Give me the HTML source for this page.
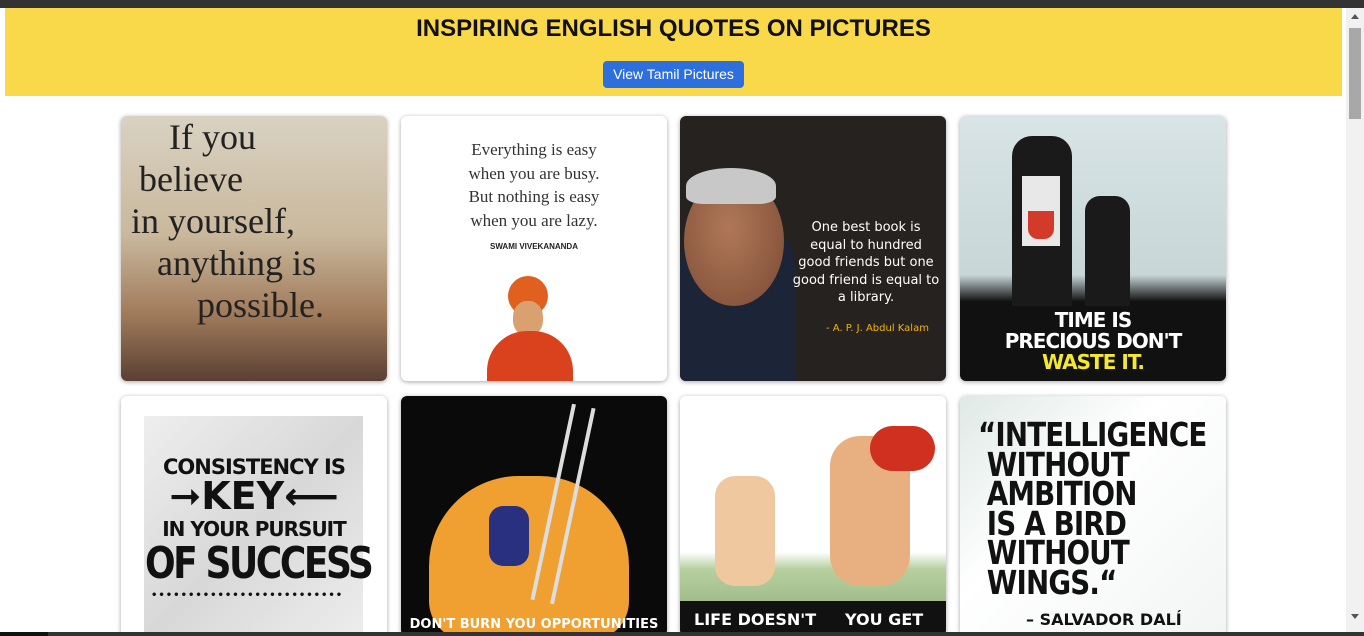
<!DOCTYPE html>
<html><head><meta charset="utf-8"><style>
*{margin:0;padding:0;box-sizing:border-box}
body{width:1364px;height:636px;overflow:hidden;background:#fff;font-family:"Liberation Sans",sans-serif;position:relative}
.top{position:absolute;left:0;top:0;width:1364px;height:8px;background:#333}
.hdr{position:absolute;left:5px;top:8px;width:1337px;height:88px;background:#f9d84a;text-align:center}
.hdr h1{font-size:24px;font-weight:bold;color:#111;margin-top:7px;letter-spacing:0;font-family:"Liberation Sans",sans-serif}
.btn{position:absolute;left:598px;top:53px;width:141px;height:27px;background:#2d6fdc;color:#fff;font-size:14px;border-radius:4px;line-height:27px}
.sb{position:absolute;left:1346px;top:8px;width:18px;height:624px;background:#f1f1f1}
.sb .th{position:absolute;left:3px;top:20px;width:12px;height:91px;background:#a8a8a8}
.sb .ar{position:absolute;left:5px;top:6px;border-left:4px solid transparent;border-right:4px solid transparent;border-bottom:5px solid #555}
.sb .ar2{position:absolute;left:5px;top:606px;border-left:4px solid transparent;border-right:4px solid transparent;border-top:5px solid #555}
.bot{position:absolute;left:0;top:632px;width:1364px;height:4px;background:#333}
.bot i{position:absolute;left:0;top:0;width:48px;height:4px;background:#111}
.c{position:absolute;width:266px;height:265px;border-radius:6px;overflow:hidden;box-shadow:0 1px 5px rgba(0,0,0,.35)}
.t{position:absolute;white-space:nowrap}
</style></head><body>
<div class="top"></div>
<div class="hdr"><h1>INSPIRING ENGLISH QUOTES ON PICTURES</h1><div class="btn">View Tamil Pictures</div></div>

<div class="c" style="left:121px;top:116px;background:linear-gradient(#d9d2c2 0%,#c9b89c 45%,#a07a5a 75%,#5a4034 100%)">
<div class="t" style="left:48px;top:0;font:36px/42px 'Liberation Serif',serif;color:#222">If you</div>
<div class="t" style="left:18px;top:42px;font:36px/42px 'Liberation Serif',serif;color:#222">believe</div>
<div class="t" style="left:10px;top:84px;font:36px/42px 'Liberation Serif',serif;color:#222">in yourself,</div>
<div class="t" style="left:36px;top:126px;font:36px/42px 'Liberation Serif',serif;color:#222">anything is</div>
<div class="t" style="left:76px;top:168px;font:36px/42px 'Liberation Serif',serif;color:#222">possible.</div>
</div>

<div class="c" style="left:401px;top:116px;background:#fff">
<div class="t" style="left:0;width:266px;text-align:center;top:22px;font:17px/23.5px 'Liberation Serif',serif;color:#333">Everything is easy<br>when you are busy.<br>But nothing is easy<br>when you are lazy.</div>
<div class="t" style="left:0;width:266px;text-align:center;top:126px;font:bold 8px 'Liberation Sans',sans-serif;color:#222">SWAMI VIVEKANANDA</div>
<div style="position:absolute;left:107px;top:160px;width:40px;height:40px;border-radius:50%;background:#e06020"></div>
<div style="position:absolute;left:112px;top:185px;width:30px;height:35px;border-radius:45%;background:#d9a070"></div>
<div style="position:absolute;left:86px;top:215px;width:86px;height:60px;border-radius:40px 40px 0 0;background:#d9421c"></div>
</div>

<div class="c" style="left:680px;top:116px;background:#262220">
<div style="position:absolute;left:0;top:110px;width:115px;height:160px;border-radius:40px 40px 0 0;background:#1c2438"></div>
<div style="position:absolute;left:4px;top:60px;width:100px;height:130px;border-radius:50%;background:radial-gradient(ellipse at 45% 40%,#b07858,#7a4a34)"></div>
<div style="position:absolute;left:6px;top:52px;width:90px;height:36px;border-radius:50% 50% 20% 20%;background:#c8c8c8"></div>
<div class="t" style="left:106px;top:103px;width:160px;text-align:center;font:13px/17.5px 'DejaVu Sans',sans-serif;color:#fff">One best book is<br>equal to hundred<br>good friends but one<br>good friend is equal to<br>a library.</div>
<div class="t" style="left:146px;top:207px;font:10px 'DejaVu Sans',sans-serif;color:#f5b400">- A. P. J. Abdul Kalam</div>
</div>

<div class="c" style="left:960px;top:116px;background:linear-gradient(#d8e4e6 0%,#c8d6d8 60%,#111 70%,#111 100%)">
<div style="position:absolute;left:52px;top:20px;width:60px;height:170px;background:#1a1a1a;border-radius:20px 20px 0 0"></div>
<div style="position:absolute;left:125px;top:80px;width:45px;height:110px;background:#1a1a1a;border-radius:15px 15px 0 0"></div>
<div style="position:absolute;left:62px;top:60px;width:38px;height:70px;background:#e8e8e8"></div>
<div style="position:absolute;left:68px;top:95px;width:26px;height:28px;background:#d43a2a;border-radius:0 0 10px 10px"></div>
<div class="t" style="left:0;width:266px;text-align:center;top:194px;font:bold 20px/21px 'DejaVu Sans',sans-serif;color:#fff;letter-spacing:-1px">TIME IS<br>PRECIOUS DON'T<br><span style="color:#f5e830">WASTE IT.</span></div>
</div>

<div class="c" style="left:121px;top:396px;height:240px;background:#fff">
<div style="position:absolute;left:23px;top:20px;width:219px;height:230px;background:linear-gradient(135deg,#eee,#d8d8d8 50%,#eee)"></div>
<div class="t" style="left:0;width:266px;text-align:center;top:58px;font:bold 21px/26px 'DejaVu Sans',sans-serif;color:#111;letter-spacing:-1px">CONSISTENCY IS</div>
<div class="t" style="left:0;width:266px;text-align:center;top:80px;font:bold 38px/40px 'DejaVu Sans',sans-serif;color:#111">➞KEY⟵</div>
<div class="t" style="left:0;width:266px;text-align:center;top:120px;font:bold 20px/26px 'DejaVu Sans',sans-serif;color:#111;letter-spacing:-1px">IN YOUR PURSUIT</div>
<div class="t" style="left:0;width:266px;text-align:center;top:142px;font:bold 44px/52px 'DejaVu Sans',sans-serif;color:#111;letter-spacing:-3px;transform:scaleX(.82)">OF SUCCESS</div>
<div class="t" style="left:30px;top:194px;font:bold 10px 'DejaVu Sans';color:#111;letter-spacing:1px">••••••••••••••••••••••••••</div>
</div>

<div class="c" style="left:401px;top:396px;height:240px;background:#0a0a0a">
<div style="position:absolute;left:28px;top:80px;width:200px;height:165px;border-radius:90px 90px 40px 40px;background:#f0a030"></div>
<div style="position:absolute;left:150px;top:8px;width:24px;height:200px;border-left:4px solid #ddd;border-right:4px solid #ddd;transform:rotate(12deg)"></div>
<div style="position:absolute;left:88px;top:110px;width:40px;height:60px;background:#2a3080;border-radius:14px"></div>
<div class="t" style="left:0;width:266px;text-align:center;top:221px;font:bold 13px 'DejaVu Sans',sans-serif;color:#fff">DON'T BURN YOU OPPORTUNITIES</div>
</div>

<div class="c" style="left:680px;top:396px;height:240px;background:linear-gradient(#fff 0%,#fff 65%,#b8d0a0 72%,#8aa878 100%)">
<div style="position:absolute;left:150px;top:40px;width:80px;height:150px;background:#e8b080;border-radius:30px"></div>
<div style="position:absolute;left:190px;top:30px;width:65px;height:45px;background:#d03020;border-radius:25px"></div>
<div style="position:absolute;left:35px;top:80px;width:60px;height:110px;background:#f0c8a0;border-radius:20px"></div>
<div style="position:absolute;left:0;top:205px;width:266px;height:40px;background:#111"></div>
<div class="t" style="left:14px;top:214px;font:bold 16px 'DejaVu Sans',sans-serif;color:#fff">LIFE DOESN'T</div>
<div class="t" style="left:165px;top:214px;font:bold 16px 'DejaVu Sans',sans-serif;color:#fff">YOU GET</div>
</div>

<div class="c" style="left:960px;top:396px;height:240px;background:linear-gradient(135deg,#dfe9e6,#fff 40%,#f2f5f4)">
<div class="t" style="left:18px;top:24px;font:bold 33px/29.5px 'DejaVu Sans',sans-serif;color:#111;letter-spacing:-1px;transform:scaleX(.84);transform-origin:0 0">“INTELLIGENCE<br>&nbsp;WITHOUT<br>&nbsp;AMBITION<br>&nbsp;IS A BIRD<br>&nbsp;WITHOUT<br>&nbsp;WINGS.“</div>
<div class="t" style="left:66px;top:214px;font:bold 16px 'DejaVu Sans',sans-serif;color:#111">– SALVADOR DALÍ</div>
</div>

<div class="sb"><div class="ar"></div><div class="th"></div><div class="ar2"></div></div>
<div class="bot"><i></i></div>
</body></html>
